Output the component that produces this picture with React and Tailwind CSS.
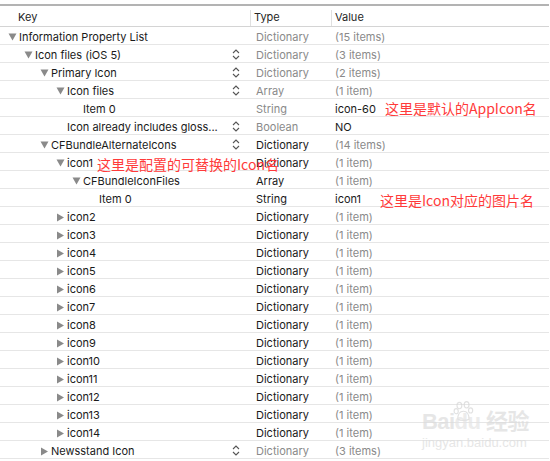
import React from 'react'

const ROWS = [
  { key: 'Information Property List', lvl: 0, tri: 'down', type: 'Dictionary', value: '(15 items)' },
  { key: 'Icon files (iOS 5)', lvl: 1, tri: 'down', step: true, type: 'Dictionary', value: '(3 items)' },
  { key: 'Primary Icon', lvl: 2, tri: 'down', step: true, type: 'Dictionary', value: '(2 items)' },
  { key: 'Icon files', lvl: 3, tri: 'down', step: true, type: 'Array', value: '(1 item)' },
  { key: 'Item 0', lvl: 4, type: 'String', value: 'icon-60', strong: true, note: '这里是默认的AppIcon名', noteAt: 'value', noteW: 'w-[50px]' },
  { key: 'Icon already includes gloss...', lvl: 3, step: true, type: 'Boolean', value: 'NO', strong: true },
  { key: 'CFBundleAlternateIcons', lvl: 2, tri: 'down', step: true, type: 'Dictionary', dark: true, value: '(14 items)' },
  { key: 'icon1', lvl: 3, tri: 'down', type: 'Dictionary', dark: true, value: '(1 item)', note: '这里是配置的可替换的Icon名', noteAt: 'key' },
  { key: 'CFBundleIconFiles', lvl: 4, tri: 'down', type: 'Array', dark: true, value: '(1 item)' },
  { key: 'Item 0', lvl: 5, type: 'String', dark: true, value: 'icon1', strong: true, note: '这里是Icon对应的图片名', noteAt: 'value', noteW: 'w-[45px]', noteY: 'mt-[2px]' },
  ...Array.from({ length: 13 }, (_, i) => ({
    key: `icon${i + 2}`, lvl: 3, tri: 'right', type: 'Dictionary', dark: true, value: '(1 item)',
  })),
  { key: 'Newsstand Icon', lvl: 2, tri: 'right', step: true, type: 'Dictionary', value: '(3 items)' },
]

function Triangle({ dir }) {
  if (dir === 'down') {
    return (
      <svg width="9" height="8" viewBox="0 0 9 8" className="shrink-0">
        <path d="M0.5 0.5 L8.5 0.5 L4.5 7.5 Z" fill="#8a8a8a" />
      </svg>
    )
  }
  return (
    <svg width="9" height="9" viewBox="0 0 9 9" className="shrink-0">
      <path d="M1 0.5 L8 4.5 L1 8.5 Z" fill="#8a8a8a" />
    </svg>
  )
}

function Stepper() {
  return (
    <svg width="8" height="11" viewBox="0 0 8 11" className="shrink-0">
      <path d="M1 4 L4 1 L7 4" fill="none" stroke="#555" strokeWidth="1.1" />
      <path d="M1 7 L4 10 L7 7" fill="none" stroke="#555" strokeWidth="1.1" />
    </svg>
  )
}

const Note = ({ children, className = '' }) => (
  <span
    className={`whitespace-nowrap text-[14px] leading-none text-[#ff3a3a] ${className}`}
    style={{ fontFamily: '"Noto Sans CJK SC", Inter, sans-serif' }}
  >
    {children}
  </span>
)

function Row({ r }) {
  const textX = 19 + 16 * r.lvl
  return (
    <div className="flex h-[18px] items-center border-b border-[#e6e6e6] pt-[3px]">
      <div className="relative flex h-full w-[250px] shrink-0 items-center" style={{ paddingLeft: textX - 11 }}>
        <span className="flex w-[11px] shrink-0 items-center">{r.tri && <Triangle dir={r.tri} />}</span>
        <span className="whitespace-nowrap text-[#1a1a1a]">{r.key}</span>
        {r.note && r.noteAt === 'key' && (
          <Note className="absolute left-[97px] top-[1px] z-10">{r.note}</Note>
        )}
        {r.step && (
          <span className="absolute left-[232px] top-[1px]"><Stepper /></span>
        )}
      </div>
      <div className={`w-[81px] shrink-0 pl-[6px] ${r.dark ? 'text-[#1a1a1a]' : 'text-[#8a8a8a]'}`}>{r.type}</div>
      <div className="flex items-center pl-[4px]">
        <span className={`${r.noteW || ''} ${r.strong ? 'text-[#1a1a1a]' : 'text-[#8a8a8a]'}`}>{r.value}</span>
        {r.note && r.noteAt === 'value' && (
          <Note className={`-mt-[2px] ${r.noteY || ''}`}>{r.note}</Note>
        )}
      </div>
    </div>
  )
}

export default function App() {
  return (
    <div
      className="relative h-[461px] w-[550px] overflow-hidden bg-white text-[11px] leading-none"
      style={{ fontFamily: 'Inter, "Noto Sans CJK SC", sans-serif' }}
    >
      <div className="mt-[4px] w-[549px] border-t-2 border-[#b3b3b3]">
        <div className="flex h-[21px] items-center border-b border-[#d4d4d4] pt-[3px] text-[#262626]">
          <div className="w-[250px] shrink-0 pl-[18px]">Key</div>
          <div className="flex h-[16px] w-[81px] shrink-0 items-center border-l border-[#e0e0e0] pl-[3px]">Type</div>
          <div className="flex h-[16px] items-center border-l border-[#e0e0e0] pl-[3px]">Value</div>
        </div>
        {ROWS.map((r, i) => <Row key={i} r={r} />)}
      </div>

      {/* watermark */}
      <div className="pointer-events-none absolute left-[422px] top-[400px] select-none opacity-70">
        <svg width="24" height="22" viewBox="0 0 30 26" className="absolute left-[31px] top-[1px]">
          <g fill="none" stroke="#d6d6d6" strokeWidth="1.4">
            <ellipse cx="8" cy="5" rx="3" ry="4" />
            <ellipse cx="17" cy="4" rx="3" ry="4" />
            <ellipse cx="4" cy="12" rx="2.6" ry="3.2" />
            <ellipse cx="22" cy="11" rx="2.6" ry="3.2" />
            <path d="M6 22 C6 14 10 12 13 12 C16 12 20 14 20 22 C17 24 9 24 6 22 Z" />
          </g>
        </svg>
        <div className="mt-[11px] whitespace-nowrap text-[22px] font-bold tracking-tight text-[#dcdcdc]" style={{ fontFamily: 'Arial, "Noto Sans CJK SC", sans-serif' }}>
          Bai<span className="text-[#e4e4e4]">du</span> 经验
        </div>
        <div className="mt-[3px] whitespace-nowrap text-[13px] text-[#dcdcdc]" style={{ fontFamily: 'Arial, sans-serif' }}>
          jingyan.baidu.com
        </div>
      </div>
    </div>
  )
}
